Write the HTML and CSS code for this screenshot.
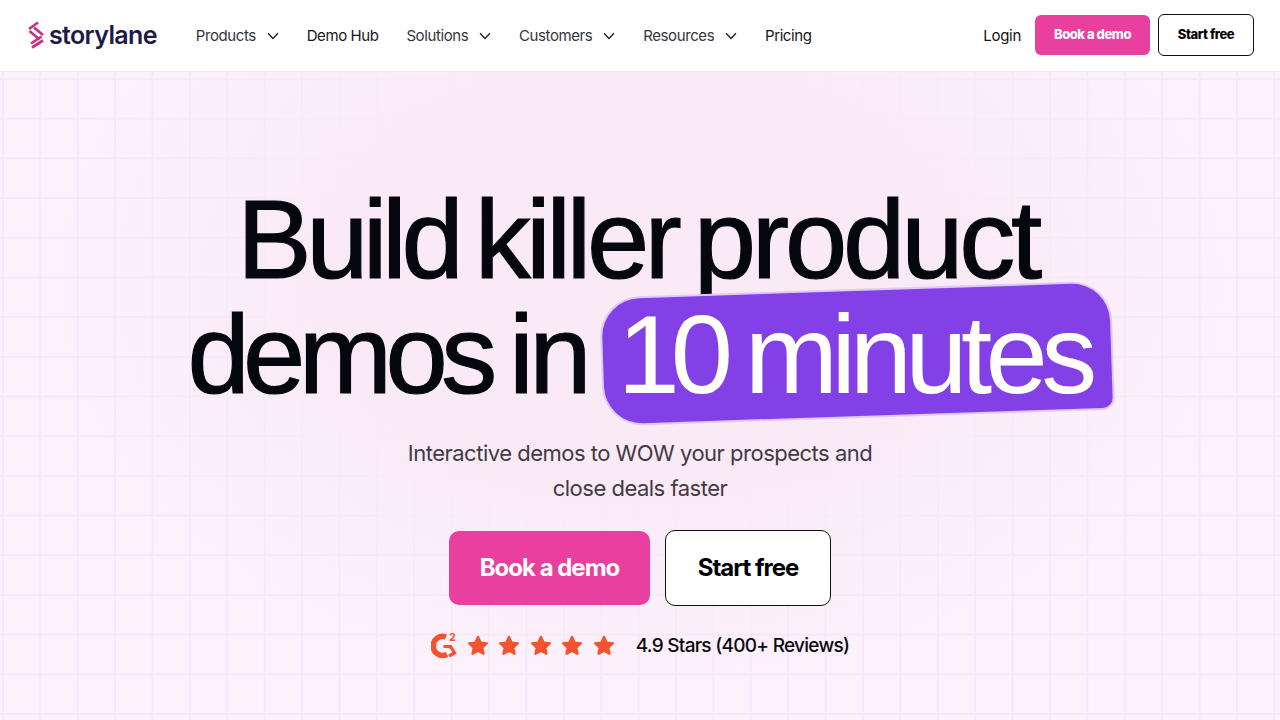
FILE: index.html
```html
<!DOCTYPE html>
<html>

<head>
    <meta charset="UTF-8">
    <meta name="viewport" content="width=device-width, initial-scale=1.0">
    <title>Storylane</title>
    <link rel="stylesheet" href="styles.css">
</head>

<body>
    <header class="header">
        <a class="logo" href="#">
            <svg class="logo__mark" width="16" height="28" viewBox="0 0 16 28" fill="none" stroke="#c9307f" stroke-width="2.7">
                <path d="M1 8 10 1.500" />
                <path d="M1.500 10 11.500 18.500" />
                <path d="M6 6.500 15 14" />
                <path d="M3 22.500 13.500 15.500" />
                <path d="M4 26.500 15 19.500" />
            </svg>
            <span class="logo__text">storylane</span>
        </a>
        <nav class="nav">
            <a class="nav__item nav__item--muted" href="#">Products
                <svg class="nav__caret" width="12" height="8" viewBox="0 0 12 8" fill="none" stroke="#222" stroke-width="1.4"><path d="M1 1.200 6 6.400 11 1.200" /></svg>
            </a>
            <a class="nav__item" href="#">Demo Hub</a>
            <a class="nav__item nav__item--muted" href="#">Solutions
                <svg class="nav__caret" width="12" height="8" viewBox="0 0 12 8" fill="none" stroke="#222" stroke-width="1.4"><path d="M1 1.200 6 6.400 11 1.200" /></svg>
            </a>
            <a class="nav__item nav__item--muted" href="#">Customers
                <svg class="nav__caret" width="12" height="8" viewBox="0 0 12 8" fill="none" stroke="#222" stroke-width="1.4"><path d="M1 1.200 6 6.400 11 1.200" /></svg>
            </a>
            <a class="nav__item nav__item--muted" href="#">Resources
                <svg class="nav__caret" width="12" height="8" viewBox="0 0 12 8" fill="none" stroke="#222" stroke-width="1.4"><path d="M1 1.200 6 6.400 11 1.200" /></svg>
            </a>
            <a class="nav__item" href="#">Pricing</a>
        </nav>
        <div class="header__actions">
            <a class="login" href="#">Login</a>
            <a class="button button--pink button--small" href="#">Book a demo</a>
            <a class="button button--white button--small" href="#">Start free</a>
        </div>
    </header>

    <main class="hero">
        <h1 class="hero__title">
            <span class="hero__line hero__line--first"><span class="hero__tight">Build</span> killer <span class="hero__wide">product</span></span>
            <span class="hero__line hero__line--second"><span class="hero__tighter">demos</span> in <span class="hero__pill"><span class="hero__digits">10</span> minutes</span></span>
        </h1>
        <p class="hero__text">Interactive demos to WOW your prospects and<br>close deals faster</p>
        <div class="hero__buttons">
            <a class="button button--pink button--large" href="#">Book a demo</a>
            <a class="button button--white button--large" href="#">Start free</a>
        </div>
        <div class="rating">
            <div class="rating__badge">
                <svg width="26" height="26" viewBox="0 0 26 26" fill="none" stroke="#f4532e">
                    <path d="M15 5A9.500 9.500 0 1 0 16 22.400" stroke-width="5.500" />
                    <path d="M12.500 14.500h7l4 6.500-5.500 3" stroke-width="3.200" />
                </svg>
                <span class="rating__two">2</span>
            </div>
            <div class="rating__stars">
                <svg width="22" height="21" viewBox="0 0 24 23"><path class="rating__star" d="M12 2l2.900 6.300 6.900.8-5.100 4.700 1.400 6.800L12 17.200l-6.100 3.400 1.400-6.800-5.100-4.700 6.900-.8z" /></svg>
                <svg width="22" height="21" viewBox="0 0 24 23"><path class="rating__star" d="M12 2l2.900 6.300 6.900.8-5.100 4.700 1.400 6.800L12 17.200l-6.100 3.400 1.400-6.800-5.100-4.700 6.900-.8z" /></svg>
                <svg width="22" height="21" viewBox="0 0 24 23"><path class="rating__star" d="M12 2l2.900 6.300 6.900.8-5.100 4.700 1.400 6.800L12 17.200l-6.100 3.400 1.400-6.800-5.100-4.700 6.900-.8z" /></svg>
                <svg width="22" height="21" viewBox="0 0 24 23"><path class="rating__star" d="M12 2l2.900 6.300 6.900.8-5.100 4.700 1.400 6.800L12 17.200l-6.100 3.400 1.400-6.800-5.100-4.700 6.900-.8z" /></svg>
                <svg width="22" height="21" viewBox="0 0 24 23"><path class="rating__star" d="M12 2l2.900 6.300 6.900.8-5.100 4.700 1.400 6.800L12 17.200l-6.100 3.400 1.400-6.800-5.100-4.700 6.900-.8z" /></svg>
            </div>
            <span class="rating__text">4.9 Stars (400+ Reviews)</span>
        </div>
    </main>
</body>

</html>
```

FILE: styles.css
```css
*,
*::before,
*::after {
    box-sizing: border-box;
    margin: 0;
    padding: 0;
}

html,
body {
    height: 100%;
    overflow: hidden;
}

body {
    font-family: "Inter", "Liberation Sans", sans-serif;
    color: #0a0a0f;
    background-color: #fff;
}

a {
    color: inherit;
    text-decoration: none;
}

.header {
    display: flex;
    align-items: center;
    height: 72px;
    padding: 0 26px 2px 28px;
    border-bottom: 1px solid #eee6f5;
    background-color: #fff;
}

.logo {
    display: flex;
    align-items: center;
    gap: 5px;
}

.logo__text {
    font-size: 25px;
    font-weight: 600;
    letter-spacing: -0.65px;
    color: #1d1a4b;
}

.nav {
    display: flex;
    align-items: center;
    gap: 27.8px;
    margin-left: 39px;
    padding-top: 2px;
}

.nav__item {
    display: flex;
    align-items: center;
    gap: 11px;
    font-size: 15px;
    letter-spacing: -0.4px;
    color: #15151c;
}

.nav__item--muted {
    color: #34343c;
}

.header__actions {
    display: flex;
    align-items: center;
    margin-left: auto;
}

.login {
    margin-right: 14px;
    padding-top: 2px;
    font-size: 15px;
    letter-spacing: -0.3px;
    color: #111;
}

.button {
    display: flex;
    align-items: center;
    justify-content: center;
    font-weight: 700;
}

.button--pink {
    background-color: #e9409f;
    color: #fff;
}

.button--white {
    border: 1px solid #111;
    background-color: #fff;
    color: #000;
}

.button--small {
    height: 40px;
    padding-bottom: 2px;
    border-radius: 6px;
    font-size: 13px;
    font-weight: 800;
    letter-spacing: -0.45px;
}

.button--small.button--pink {
    width: 115px;
}

.button--small.button--white {
    width: 96px;
    height: 42px;
    margin-left: 8px;
}

.button--large {
    height: 74px;
    padding-bottom: 2px;
    border-radius: 10px;
    font-size: 24px;
    letter-spacing: -1px;
}

.button--large.button--pink {
    width: 201px;
}

.button--large.button--white {
    width: 166px;
    height: 76px;
}

.hero {
    display: flex;
    flex-direction: column;
    align-items: center;
    height: 648px;
    padding-top: 110px;
    background-color: #fdf2fc;
    background-image:
        radial-gradient(ellipse 620px 420px at 50% 32%, #f9eaf6 50%, rgba(249, 234, 246, 0) 100%),
        linear-gradient(to right, #f3e9fa 2px, transparent 2px),
        linear-gradient(to bottom, #f3e9f9 2px, transparent 2px);
    background-size: 100% 100%, 37.4px 39.7px, 37.4px 39.7px;
    background-position: 0 0, 2px 0, 0 6px;
}

.hero__title {
    display: flex;
    flex-direction: column;
    align-items: center;
    font-family: "Liberation Sans", "Inter", sans-serif;
    font-size: 112px;
    font-weight: 400;
    line-height: 115px;
    letter-spacing: -4.6px;
    word-spacing: -10px;
    color: #05070f;
    -webkit-text-stroke: 1.2px #05070f;
}

.hero__line {
    display: block;
    white-space: nowrap;
}

.hero__line--first {
    padding-right: 5px;
}

.hero__line--second {
    padding-left: 20px;
}

.hero__tight {
    letter-spacing: -5.6px;
}

.hero__wide {
    letter-spacing: -4.2px;
}

.hero__tighter {
    letter-spacing: -6.6px;
    margin-right: 2px;
}

.hero__pill {
    display: inline-block;
    position: relative;
    margin-left: -3px;
    padding: 0 22px 0 17px;
    isolation: isolate;
    color: #fff;
    letter-spacing: -6.6px;
    word-spacing: -4px;
    -webkit-text-stroke: 0;
}

.hero__digits {
    letter-spacing: -9px;
}

.hero__pill::before {
    content: "";
    position: absolute;
    inset: -6px 2px -4px 2px;
    z-index: -1;
    border-radius: 38px 38px 10px 38px;
    background-color: #8240e6;
    box-shadow: 0 0 0 2px #dfc9f8;
    transform: rotate(-1.9deg);
}

.hero__text {
    margin-top: 24px;
    font-size: 22px;
    line-height: 35px;
    letter-spacing: -0.5px;
    text-align: center;
    color: #3f3a44;
}

.hero__buttons {
    display: flex;
    align-items: center;
    gap: 15px;
    margin-top: 24px;
}

.rating {
    display: flex;
    align-items: center;
    margin-top: 26px;
}

.rating__badge {
    position: relative;
    width: 26px;
    height: 26px;
}

.rating__two {
    position: absolute;
    top: 0;
    right: 1px;
    font-size: 10px;
    font-weight: 800;
    line-height: 10px;
    color: #f4532e;
}

.rating__stars {
    display: flex;
    gap: 9.5px;
    margin-left: 10px;
}

.rating__star {
    fill: #f4532e;
    stroke: #f4532e;
    stroke-width: 2.4;
    stroke-linejoin: round;
}

.rating__text {
    margin-left: 21px;
    font-size: 19px;
    font-weight: 500;
    letter-spacing: -0.72px;
    color: #0a0a0f;
}
```
